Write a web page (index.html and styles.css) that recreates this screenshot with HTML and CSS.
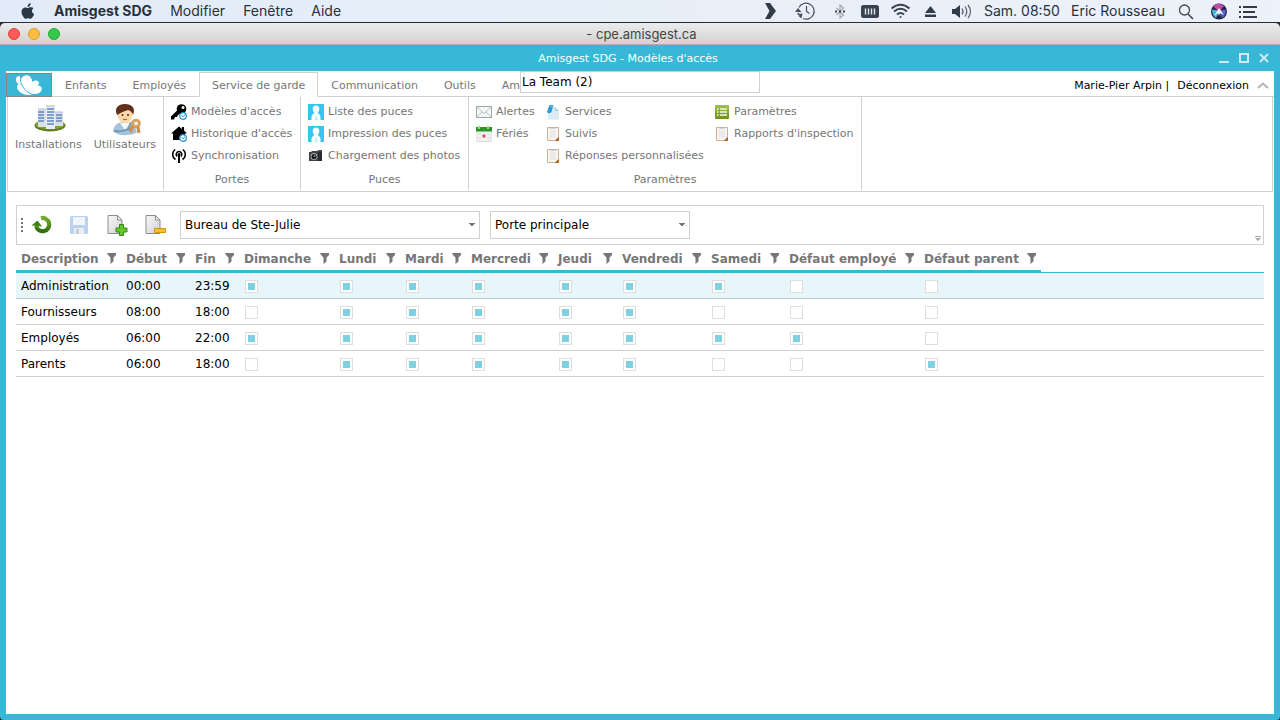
FILE: index.html
```html
<!DOCTYPE html>
<html lang="fr">
<head>
<meta charset="utf-8">
<title>Amisgest SDG - Modèles d'accès</title>
<link rel="stylesheet" href="styles.css">
</head>
<body>
<svg class="defs" aria-hidden="true">
  <defs>
    <linearGradient id="green" x1="0" y1="0" x2="0" y2="1"><stop offset="0" stop-color="#9fc246"/><stop offset="1" stop-color="#6e9222"/></linearGradient>
    <linearGradient id="arrow" x1="0" y1="0" x2="0" y2="1"><stop offset="0" stop-color="#77ad2c"/><stop offset="1" stop-color="#2f7010"/></linearGradient>
    <linearGradient id="paper" x1="0" y1="0" x2="1" y2="1"><stop offset="0" stop-color="#fafafa"/><stop offset="1" stop-color="#cfcfcf"/></linearGradient>
    <symbol id="badge" viewBox="0 0 8 8"><circle cx="4" cy="4" r="3.300" fill="#fff" stroke="#1b8fd0" stroke-width="1.200"/><path d="M2.400 3.200 4 4.600 6 2.800" fill="none" stroke="#1b8fd0"/></symbol>
    <symbol id="funnel" viewBox="0 0 9 11"><path d="M0 0h9v2L6.500 4.500v4l-3 2.500V4.500L1 2z" fill="#777"/></symbol>
    <symbol id="person" viewBox="0 0 16 16"><path d="M0 0h16v16H0z" fill="#35c5ee"/><path d="M8 1.500c2.200 0 3.500 1.500 3.300 3.700-.1 1.500-.9 2.600-1.300 3.300.2 1.500 1.500 1.600 2 2.500.7 1 .5 3 .5 5h-9c0-2-.2-4 .5-5s1.800-1 2-2.500c-.5-.7-1.200-1.800-1.300-3.300C4.500 3 5.800 1.500 8 1.500z" fill="#f5fcff"/><path d="M7 16 8 11l2 5z" fill="#bfeaf8"/></symbol>
    <symbol id="clipboard" viewBox="0 0 16 16"><path d="M2.500 1.500h11v13h-11z" fill="#f7f5f3" stroke="#d8b090"/><path d="M5 4h6v8H5z" fill="#edebea"/><path d="M5 1h6v1.500H5z" fill="#b9b4ae"/><path d="M13.500 11.500v3h-3z" fill="#b8651f" stroke="#b8651f"/></symbol>
    <symbol id="page" viewBox="0 0 22 22"><path d="M2 1.500h9.500l4.500 4.500v13.500H2z" fill="url(#paper)" stroke="#8d8d8d"/><path d="M11.500 1.500V6H16z" fill="#f5f5f5" stroke="#8d8d8d"/></symbol>
  </defs>
</svg>

<header class="menubar">
  <nav class="menus">
    <svg class="apple" viewBox="0 0 14 16"><path d="M9.700 0c.1 1.300-.4 2.200-1 2.900-.6.700-1.400 1.100-2.200 1 0-1 .4-1.900 1-2.600C8.100.7 9 .1 9.700 0zM12.600 5.300c-1 .6-1.600 1.500-1.600 2.800 0 1.400.9 2.600 2.200 3-.5 1.500-1.600 3.300-2.600 4.200-.9.700-1.700.5-2.400.2-.8-.4-1.500-.4-2.300 0-.9.400-1.700.5-2.500-.3C1.500 13.300.400 10.900.5 8.600c.1-2.600 1.700-4.200 3.700-4.200 1 0 1.800.6 2.600.6.700 0 1.600-.7 3-.7 1.100 0 2.200.4 2.800 1z" fill="#2d3845"/></svg>
    <strong>Amisgest SDG</strong><span>Modifier</span><span>Fenêtre</span><span>Aide</span>
  </nav>
  <div class="status">
    <svg width="24" height="20" viewBox="0 0 24 20"><path d="M4 2h5l6 8-6 8H4l4.500-8z" fill="#333b47"/></svg>
    <svg width="25" height="20" viewBox="0 0 25 20" fill="none" stroke="#47505c"><path d="M4 6.500a8 8 0 1 1 4 11" stroke-width="1.200"/><path d="M3 12a7.700 7.700 0 0 0 3.500 4.500" stroke-width="1.500" stroke-dasharray="2 1"/><path d="M11.500 5v5.500l3 2" stroke-width="1.200"/><path d="m0 11 3-4 3.500 4zM3 13l4.500-.5-1 5z" fill="#47505c" stroke="none"/></svg>
    <svg width="20" height="20" viewBox="0 0 20 20"><path d="m6.500 7 7 7-3.500 3V4l3.500 3-7 7" fill="none" stroke="#a2a8b1" stroke-width="1.200"/><path d="M5 9.500h2v2H5zM9 9.500h2v2H9zM13 9.500h2v2h-2z" fill="#39424e"/></svg>
    <svg width="20" height="20" viewBox="0 0 20 20"><rect x="1" y="4" width="18" height="13" rx="2.500" fill="#39424e"/><path d="M5.500 7.500v6M8.500 7.500v6M11.500 7.500v6M14.500 7.500v6" stroke="#dfe5ee" stroke-width="1.400"/></svg>
    <svg width="22" height="20" viewBox="0 0 22 20" fill="none" stroke="#39424e" stroke-width="2"><path d="M1.500 7.500q9-7.500 18 0M4 10.500q6.500-5.500 13 0M7 13.500q3.500-3 7 0"/><circle cx="10.500" cy="16" r="1" fill="#39424e" stroke="none"/></svg>
    <svg width="20" height="20" viewBox="0 0 20 20"><path d="M8.500 5 14 12H3zM3 13.500h11v2.500H3z" fill="#333b47"/></svg>
    <svg width="22" height="20" viewBox="0 0 22 20"><path d="M0 8h3l5-4v13l-5-4H0z" fill="#333b47"/><path d="M10 7.500q2 3 0 6M13 5.500q3.500 5 0 10M16 4q5 6.500 0 13" fill="none" stroke="#5d6672" stroke-width="1.300"/></svg>
    <span class="clock">Sam. 08:50</span>
    <span class="user">Eric Rousseau</span>
    <svg width="20" height="20" viewBox="0 0 20 20" fill="none" stroke="#434b57"><circle cx="5.500" cy="9" r="5" stroke-width="1.300"/><path d="m9 13 5 5" stroke-width="1.700"/></svg>
    <svg width="20" height="20" viewBox="0 0 20 20"><circle cx="10" cy="10.500" r="8" fill="#252447"/><path d="M4 5q6-5 11 0l-5 6z" fill="#c04aa6"/><path d="M3 9q4-1 7 2l-3 6q-4-3-4-8z" fill="#3fb8dd"/><path d="M17 9q-4-1-7 2l3 6q4-3 4-8z" fill="#5561c7"/><path d="m5 15 5-8 5 7-4-2-1 3-1-3z" fill="#f4fbff"/></svg>
    <svg width="18" height="20" viewBox="0 0 18 20" stroke="#333b47" stroke-width="2"><path d="M0 6h2M4 6h14M0 11h2M4 11h12M0 16h2M4 16h14"/></svg>
  </div>
</header>

<div class="titlebar">
  <div class="lights"><i class="red"></i><i class="yellow"></i><i class="green"></i></div>
  <span>- cpe.amisgest.ca</span>
</div>

<div class="app">
  <div class="apptitle">
    <h1>Amisgest SDG - Modèles d'accès</h1>
    <div class="winbtns">
      <button aria-label="Réduire"><svg viewBox="0 0 10 10"><path d="M0 8h10v2H0z" fill="#c9edf5"/></svg></button>
      <button aria-label="Agrandir"><svg viewBox="0 0 10 10"><path d="M1 1h8v8H1z" fill="none" stroke="#c9edf5" stroke-width="2"/></svg></button>
      <button aria-label="Fermer"><svg viewBox="0 0 10 10"><path d="m1 1 8 8M9 1 1 9" stroke="#c9edf5" stroke-width="2"/></svg></button>
    </div>
  </div>

  <main class="content">
    <div class="tabs">
      <button class="logo" aria-label="Menu Amisgest"><svg viewBox="0 0 28 21"><path d="M4.500 1C1 1 .5 4 1.500 7c.5 1.300 1.500 2 2.500 2.300C3 10 1.500 10.500 2 12.500c.8 4 6 7.500 12 7.500 1 0 2 0 3-.3" fill="#fff"/><path d="M9 1c4-2 7.500.5 8.500 6 3-2.500 6.500-1.500 6.500 1 0 1.200-.6 2-1.500 2.500 3 0 4.700 2 4.200 4C26 18 22 19.500 18 19 11 18 6.500 13 6 7 5.800 4 7 2 9 1z" fill="#fff"/><path d="M6 1.500C4 7 8 16 18 19.800" fill="none" stroke="#38b7d6"/></svg></button>
      <button class="tab">Enfants</button>
      <button class="tab">Employés</button>
      <button class="tab active">Service de garde</button>
      <button class="tab">Communication</button>
      <button class="tab">Outils</button>
      <button class="tab">Amisgest</button>
      <div class="account"><span>Marie-Pier Arpin |</span><a href="#">Déconnexion</a><svg viewBox="0 0 12 7"><path d="m1 6 5-4.500L11 6" fill="none" stroke="#b5b5b5" stroke-width="2"/></svg></div>
    </div>
    <input class="team" aria-label="Équipe" value="La Team (2)">

    <section class="ribbon">
      <div class="group big-items">
        <button class="big"><svg viewBox="0 0 32 32"><ellipse cx="16" cy="21.500" rx="15.500" ry="6" fill="#5f7d22"/><ellipse cx="16" cy="20.500" rx="14.500" ry="4.800" fill="#83a03a"/><path d="M4 5h9v18H4zM20 8h9v14h-9z" fill="#d9e0e8"/><path d="M12 2h9v23h-9z" fill="#e9edf1"/><path d="M4 8h6M4 11h6M4 14h6M4 17h6M13 5h7M13 8h7M13 11h7M13 14h7M13 17h7M13 20h7M22 11h6M22 14h6M22 17h6" stroke="#5f86bb" stroke-width="1.500"/><path d="M4 5h8M12 2h9M20 8h9" stroke="#b3bcc8"/></svg>Installations</button>
        <button class="big"><svg viewBox="0 0 32 32"><path d="M2 27c1-6 5-9 11-9 7 0 12 5 13 10q-3 3-10 3Q6 32 2 27z" fill="#a5c3da"/><path d="m9 19 5 7 5-7z" fill="#f6fafd"/><path d="M3 27q10 1 17-3" stroke="#6f98b8" fill="none" stroke-width="2"/><ellipse cx="14" cy="11" rx="7.500" ry="8" fill="#fbd7a8"/><path d="M6 11C3 4 7 0 14 0s11 4 8 11q-1-4-5-5Q10 8 6 11z" fill="#61301b"/><circle cx="11.500" cy="11" r="1" fill="#432"/><circle cx="17" cy="11" r="1" fill="#432"/><path d="M12 15q2 1.500 4 0" fill="none" stroke="#a05a3a"/><circle cx="25" cy="19.500" r="3.300" fill="none" stroke="#d9a05e" stroke-width="3"/><path d="m22 22-3 6M27 23l1 6" stroke="#d08e45" stroke-width="3"/><path d="m20 18-3 8" stroke="#8b98a3" stroke-width="2"/></svg>Utilisateurs</button>
      </div>

      <div class="group doors">
        <div class="cols"><div class="col">
          <button class="item"><svg viewBox="0 0 16 16"><circle cx="10.500" cy="5" r="4.800"/><circle cx="12" cy="3.500" r="1.500" fill="#fff"/><path d="m6.500 6 3.500 3-3 2-1 2H4l-1 2.500H0v-3z"/><use href="#badge" x="8" y="8" width="8" height="8"/></svg>Modèles d'accès</button>
          <button class="item"><svg viewBox="0 0 16 16"><path d="M8 .5 0 7.500h2V14h12V7.500h2l-3-3V1h-2v2z"/><use href="#badge" x="8" y="8" width="8" height="8"/></svg>Historique d'accès</button>
          <button class="item"><svg viewBox="0 0 16 16"><path d="M4.500 11.500A6 6 0 0 1 4.200 1.500M11.800 1.500A6 6 0 0 1 11.500 11.500M6.200 8.500a2.800 2.800 0 1 1 3.600 0" fill="none" stroke="#000" stroke-width="1.500"/><circle cx="8" cy="6.500" r="1.500"/><path d="M7 7h2v8H7z"/></svg>Synchronisation</button>
        </div></div>
        <div class="caption">Portes</div>
      </div>

      <div class="group chips">
        <div class="cols"><div class="col">
          <button class="item"><svg><use href="#person"/></svg>Liste des puces</button>
          <button class="item"><svg><use href="#person"/></svg>Impression des puces</button>
          <button class="item"><svg viewBox="0 0 16 16"><path d="M1 4h2l1-1h5l2-1h3v11H1z" fill="#404346"/><path d="M10 4h4v9h-4z" fill="#292b2d"/><circle cx="6" cy="8.500" r="3.300" fill="#ccc"/><circle cx="6" cy="8.500" r="2.600" fill="#151719"/><circle cx="6.500" cy="8" r="1" fill="#8b9298"/></svg>Chargement des photos</button>
        </div></div>
        <div class="caption">Puces</div>
      </div>

      <div class="group settings">
        <div class="cols">
          <div class="col alerts">
            <button class="item"><svg viewBox="0 0 16 16"><path d="M.5 2.500h15v11H.5z" fill="#f4f8f7" stroke="#9da9a7"/><path d="m1 3 7 6.500L15 3M1 13l5-5M15 13l-5-5" fill="none" stroke="#b5c0be"/></svg>Alertes</button>
            <button class="item"><svg viewBox="0 0 16 16"><path d="M1 3h14v12.500H1z" fill="#f2f4f2" stroke="#d5dad5"/><path d="M0 1h16v4.500H0z" fill="#299528"/><path d="M3 0v3M12 0v3" stroke="#9bdc85" stroke-width="2"/><circle cx="8" cy="10" r="1.700" fill="#d84e5b"/><path d="M3 8h2M11 8h2M3 12h2M11 12h2" stroke="#ccc"/></svg>Fériés</button>
          </div>
          <div class="col services">
            <button class="item"><svg viewBox="0 0 16 16"><path d="M3 3h7l4 4v8.500H3z" fill="#dceaf1"/><path d="M9 2 14 7h-4z" fill="#b8d3df"/><path d="M4.500 1 8.500 1 6.500 8q-2.500 2.500-4.500 0z" fill="#2d9bd7"/><path d="m5 3 3-1" stroke="#66c2ee"/></svg>Services</button>
            <button class="item"><svg><use href="#clipboard"/></svg>Suivis</button>
            <button class="item"><svg><use href="#clipboard"/></svg>Réponses personnalisées</button>
          </div>
          <div class="col">
            <button class="item"><svg viewBox="0 0 16 16"><rect x="1" y="1" width="14" height="14" rx="1" fill="url(#green)"/><path d="M3 5h1.500M6 5h7M3 8h1.500M6 8h7M3 11h1.500M6 11h7" stroke="#f4f9e5" stroke-width="1.400"/></svg>Paramètres</button>
            <button class="item"><svg><use href="#clipboard"/></svg>Rapports d'inspection</button>
          </div>
        </div>
        <div class="caption">Paramètres</div>
      </div>
    </section>

    <div class="toolbar">
      <span class="grip"></span>
      <button aria-label="Actualiser"><svg viewBox="0 0 22 22"><path d="M11 4.200A6.600 6.600 0 1 1 6.200 12" fill="none" stroke="url(#arrow)" stroke-width="4.200"/><path d="m1.500 11.500 6-5 4.500 6z" fill="#447f18"/></svg></button>
      <button aria-label="Enregistrer"><svg viewBox="0 0 22 22"><rect x="2" y="2" width="18" height="18" rx="1.500" fill="#b9d2f2"/><path d="M5 3h12v8H5z" fill="#f2f6fb"/><path d="M6 14h10v6H6z" fill="#eceef1"/><path d="M8 15h3v5H8z" fill="#c6cdd6"/></svg></button>
      <button aria-label="Ajouter"><svg viewBox="0 0 22 22"><use href="#page"/><path d="M13.500 10.500h4v3.500h3.500v4h-3.500v3.500h-4V18H10v-4h3.500z" fill="#63c42d" stroke="#35891a"/></svg></button>
      <button aria-label="Supprimer"><svg viewBox="0 0 22 22"><use href="#page"/><path d="M10.500 14.500h11v4h-11z" fill="#fac02e" stroke="#dc9214"/></svg></button>
      <select class="site" aria-label="Installation"><option>Bureau de Ste-Julie</option></select>
      <select class="door" aria-label="Porte"><option>Porte principale</option></select>
      <svg class="more" viewBox="0 0 6 6"><path d="M0 0h6v1H0zM0 2h6L3 5z" fill="#aaa"/></svg>
    </div>

    <table>
      <colgroup><col class="w-desc"><col class="w-start"><col class="w-end"><col class="w-sun"><col class="w-short"><col class="w-short"><col class="w-wed"><col class="w-thu"><col class="w-fri"><col class="w-sat"><col class="w-emp"><col class="w-par"><col></colgroup>
      <thead><tr>
        <th><span>Description<svg><use href="#funnel"/></svg></span></th><th><span>Début<svg><use href="#funnel"/></svg></span></th><th><span>Fin<svg><use href="#funnel"/></svg></span></th><th><span>Dimanche<svg><use href="#funnel"/></svg></span></th><th><span>Lundi<svg><use href="#funnel"/></svg></span></th><th><span>Mardi<svg><use href="#funnel"/></svg></span></th><th><span>Mercredi<svg><use href="#funnel"/></svg></span></th><th><span>Jeudi<svg><use href="#funnel"/></svg></span></th><th><span>Vendredi<svg><use href="#funnel"/></svg></span></th><th><span>Samedi<svg><use href="#funnel"/></svg></span></th><th><span>Défaut employé<svg><use href="#funnel"/></svg></span></th><th><span>Défaut parent<svg><use href="#funnel"/></svg></span></th><td class="rest"></td>
      </tr></thead>
      <tbody>
        <tr class="selected"><td>Administration</td><td>00:00</td><td>23:59</td><td><input type="checkbox" aria-label="Dimanche" checked></td><td><input type="checkbox" aria-label="Lundi" checked></td><td><input type="checkbox" aria-label="Mardi" checked></td><td><input type="checkbox" aria-label="Mercredi" checked></td><td><input type="checkbox" aria-label="Jeudi" checked></td><td><input type="checkbox" aria-label="Vendredi" checked></td><td><input type="checkbox" aria-label="Samedi" checked></td><td><input type="checkbox" aria-label="Défaut employé"></td><td><input type="checkbox" aria-label="Défaut parent"></td><td></td></tr>
        <tr><td>Fournisseurs</td><td>08:00</td><td>18:00</td><td><input type="checkbox" aria-label="Dimanche"></td><td><input type="checkbox" aria-label="Lundi" checked></td><td><input type="checkbox" aria-label="Mardi" checked></td><td><input type="checkbox" aria-label="Mercredi" checked></td><td><input type="checkbox" aria-label="Jeudi" checked></td><td><input type="checkbox" aria-label="Vendredi" checked></td><td><input type="checkbox" aria-label="Samedi"></td><td><input type="checkbox" aria-label="Défaut employé"></td><td><input type="checkbox" aria-label="Défaut parent"></td><td></td></tr>
        <tr><td>Employés</td><td>06:00</td><td>22:00</td><td><input type="checkbox" aria-label="Dimanche" checked></td><td><input type="checkbox" aria-label="Lundi" checked></td><td><input type="checkbox" aria-label="Mardi" checked></td><td><input type="checkbox" aria-label="Mercredi" checked></td><td><input type="checkbox" aria-label="Jeudi" checked></td><td><input type="checkbox" aria-label="Vendredi" checked></td><td><input type="checkbox" aria-label="Samedi" checked></td><td><input type="checkbox" aria-label="Défaut employé" checked></td><td><input type="checkbox" aria-label="Défaut parent"></td><td></td></tr>
        <tr><td>Parents</td><td>06:00</td><td>18:00</td><td><input type="checkbox" aria-label="Dimanche"></td><td><input type="checkbox" aria-label="Lundi" checked></td><td><input type="checkbox" aria-label="Mardi" checked></td><td><input type="checkbox" aria-label="Mercredi" checked></td><td><input type="checkbox" aria-label="Jeudi" checked></td><td><input type="checkbox" aria-label="Vendredi" checked></td><td><input type="checkbox" aria-label="Samedi"></td><td><input type="checkbox" aria-label="Défaut employé"></td><td><input type="checkbox" aria-label="Défaut parent" checked></td><td></td></tr>
      </tbody>
    </table>
  </main>
</div>
</body>
</html>
```

FILE: styles.css
```css
* { box-sizing: border-box; }
body {
  margin: 0;
  min-height: 100vh;
  display: flex;
  flex-direction: column;
  background: #20303c;
  font: 11px/16px "DejaVu Sans", sans-serif;
  color: #767676;
}
button { border: 0; padding: 0; background: none; font: inherit; color: inherit; }
svg { display: block; flex: none; }
.defs { position: absolute; width: 0; height: 0; }

/* System menu bar */
.menubar {
  display: flex;
  justify-content: space-between;
  height: 22px;
  padding: 0 23px 0 21px;
  background: linear-gradient(90deg, #e1ecf8, #edf1f9);
  color: #29313d;
  font: 14px/22px Inter, sans-serif;
  white-space: nowrap;
}
.menus { display: flex; align-items: center; gap: 18px; }
.apple { width: 14px; height: 16px; }
.menus strong { padding-left: 1px; }
.status { display: flex; align-items: center; gap: 10px; }
.clock { width: 77px; }
.user { width: 98px; }

.titlebar {
  display: grid;
  grid-template-columns: 1fr auto 1fr;
  align-items: center;
  height: 22px;
  margin-top: 1px;
  padding-left: 3px;
  border-bottom: 1px solid #b4aeab;
  border-radius: 5px 5px 0 0;
  background: linear-gradient(#ececec, #d2d2d2);
  color: #464646;
  font: 13px/20px Inter, sans-serif;
}
.lights { display: flex; gap: 8px; padding-left: 5px; }
.lights i { width: 12px; height: 12px; border-radius: 50%; }
.red { background: #fc5b57; border: 1px solid #e2443f; }
.yellow { background: #fdbc40; border: 1px solid #dfa023; }
.green { background: #34c84a; border: 1px solid #24ab35; }

/* Application window */
.app {
  flex: 1;
  display: flex;
  flex-direction: column;
  padding: 0 6px 6px;
  border-radius: 0 0 4px 4px;
  background: #38b7d6;
}
.apptitle { display: flex; align-items: center; height: 26px; padding-right: 5px; color: #fff; }
.apptitle h1 { flex: 1; margin: 0; padding: 2px 0 0 31px; font: inherit; text-align: center; }
.winbtns { display: flex; gap: 10px; }
.winbtns svg { width: 10px; height: 10px; }
.content { position: relative; flex: 1; background: #fff; }

.tabs { display: flex; align-items: flex-end; height: 26px; white-space: nowrap; }
.logo { width: 46px; height: 24px; border: 1px solid #858585; background: #38b7d6; }
.logo svg { width: 28px; height: 21px; margin: 0 auto; }
.tab { height: 25px; padding: 3px 13px 0; border-bottom: 1px solid #d0d0d0; }
.tab.active { padding: 2px 12px 0; border: 1px solid #d0d0d0; border-bottom-color: #fff; }
.account {
  flex: 1;
  display: flex;
  align-items: center;
  justify-content: flex-end;
  gap: 8px;
  height: 25px;
  padding: 3px 5px 0 0;
  border-bottom: 1px solid #d0d0d0;
  color: #000;
}
.account a { color: inherit; text-decoration: none; }
.account svg { width: 12px; height: 7px; }
.team {
  position: absolute;
  top: 0;
  left: calc(50% - 120px);
  width: 240px;
  height: 22px;
  padding: 0 1px;
  border: 1px solid #d0d0d0;
  background: #fff;
  color: #000;
  font: 12px/20px "DejaVu Sans", sans-serif;
}

.ribbon { display: flex; height: 95px; margin: 0 1px; padding-bottom: 1px; border: 1px solid #d0d0d0; border-top: 0; }
.group { display: flex; flex-direction: column; padding: 4px 7px 0; border-right: 1px solid #d0d0d0; }
.big-items { flex-direction: row; justify-content: space-between; align-items: flex-start; width: 156px; }
.big { display: flex; flex-direction: column; align-items: center; gap: 1px; }
.big svg { width: 32px; height: 32px; margin: 3px 0 0 4px; }
.doors { width: 137px; }
.chips { width: 168px; }
.settings { width: 393px; }
.cols { display: flex; height: 68px; }
.alerts { width: 69px; }
.services { width: 169px; }
.item { display: flex; align-items: center; gap: 4px; height: 22px; white-space: nowrap; line-height: 18px; }
.item svg { width: 16px; height: 16px; }
.caption { padding-top: 3px; text-align: center; line-height: 20px; }

/* Toolbar */
.toolbar {
  position: relative;
  display: flex;
  align-items: center;
  height: 40px;
  margin: 13px 10px 0;
  padding-left: 4px;
  border: 1px solid #d0d0d0;
}
.toolbar button { width: 38px; padding: 0 11px 0 5px; }
.toolbar button svg { width: 22px; height: 22px; }
.grip { width: 2px; height: 14px; margin-right: 2px; background: repeating-linear-gradient(#777 0 2px, #fff 2px 4px); }
select {
  height: 28px;
  padding: 0 4px;
  border: 1px solid #d0d0d0;
  border-radius: 0;
  appearance: none;
  background-color: #fff;
  background-image: linear-gradient(to bottom right, #777 50%, transparent 51%), linear-gradient(to bottom left, #777 50%, transparent 51%);
  background-position: right 4px center, right 7px center;
  background-size: 3px 4px;
  background-repeat: no-repeat;
  color: #000;
  font: 12px/26px "DejaVu Sans", sans-serif;
}
.site { width: 300px; margin-left: 3px; }
.door { width: 200px; margin-left: 10px; }
.more { position: absolute; right: 2px; bottom: 2px; width: 6px; height: 6px; }

/* Access model table */
table { width: calc(100% - 20px); margin: 0 10px; border-collapse: separate; border-spacing: 0; table-layout: fixed; }
.w-desc { width: 105px; }
.w-start { width: 69px; }
.w-end { width: 49px; }
.w-sun { width: 95px; }
.w-short { width: 66px; }
.w-wed { width: 87px; }
.w-thu { width: 64px; }
.w-fri { width: 89px; }
.w-sat { width: 78px; }
.w-emp { width: 135px; }
.w-par { width: 122px; }
th { height: 28px; padding: 2px 5px 0; border-bottom: 3px solid #38b7d6; text-align: left; }
th span { display: flex; align-items: center; justify-content: space-between; font-size: 12px; white-space: nowrap; }
th svg { width: 9px; height: 11px; }
.rest { border-bottom: 1px solid #38b7d6; }
tbody td { height: 26px; padding: 0 5px; border-bottom: 1px solid #d0d0d0; color: #000; font-size: 12px; white-space: nowrap; }
.selected td { background: #e8f5fa; border-bottom-color: #c0cdd2; }
input[type="checkbox"] {
  display: block;
  width: 13px;
  height: 13px;
  margin: 2px 0 0 1px;
  padding: 2px;
  border: 1px solid #dedede;
  appearance: none;
  background: #fff;
}
input[type="checkbox"]:checked { background: linear-gradient(#80d0e4, #80d0e4) center / 7px 7px no-repeat #fff; }
```
